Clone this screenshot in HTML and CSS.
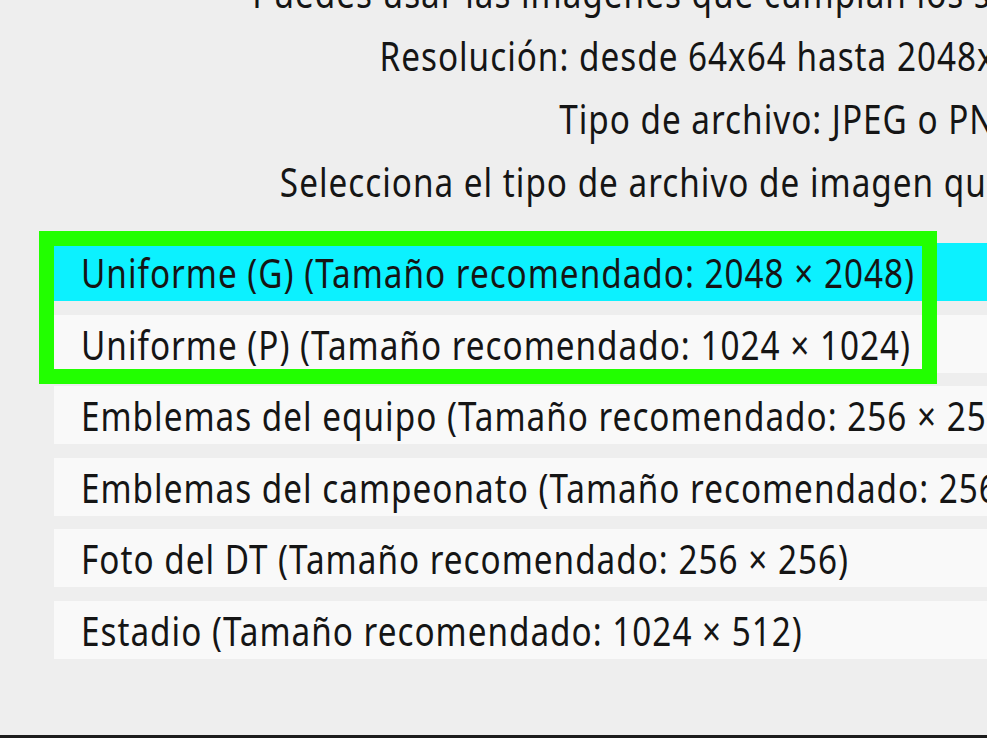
FILE: index.html
```html
<!DOCTYPE html>
<html lang="es">
<head>
<meta charset="utf-8">
<title>Importar imagen</title>
<link rel="stylesheet" href="styles.css">
</head>
<body>
<div class="screen">
  <section class="panel">
    <div class="intro">
      <p class="intro-line">Puedes usar las imágenes que cumplan los siguientes requisitos:</p>
      <p class="intro-line">Resolución: desde 64x64 hasta 2048x2048 píxeles</p>
      <p class="intro-line">Tipo de archivo: JPEG o PNG</p>
      <p class="intro-line">Selecciona el tipo de archivo de imagen que quieres importar.</p>
    </div>
    <ul class="options">
      <li class="option is-selected"><span class="label">Uniforme (G) (Tamaño recomendado: 2048 × 2048)</span></li>
      <li class="option"><span class="label">Uniforme (P) (Tamaño recomendado: 1024 × 1024)</span></li>
      <li class="option"><span class="label">Emblemas del equipo (Tamaño recomendado: 256 × 256)</span></li>
      <li class="option"><span class="label">Emblemas del campeonato (Tamaño recomendado: 256 × 256)</span></li>
      <li class="option"><span class="label">Foto del DT (Tamaño recomendado: 256 × 256)</span></li>
      <li class="option"><span class="label">Estadio (Tamaño recomendado: 1024 × 512)</span></li>
      <li class="focus-ring" aria-hidden="true"></li>
    </ul>
  </section>
</div>
</body>
</html>
```

FILE: styles.css
```css
html, body {
  margin: 0;
  padding: 0;
  background: #eeeeee;
  overflow: hidden;
}

body {
  font-family: "Noto Sans", "DejaVu Sans", sans-serif;
  font-size: 40px;
  color: #151515;
}

.screen {
  height: 738px;
  box-sizing: border-box;
  border-bottom: 3px solid #1c1c1c;
  overflow: hidden;
}

.panel {
  margin-left: 54px;
  width: 1472px;
}

/* the UI face is a narrow DIN-style sans; squeeze the text horizontally */
.intro {
  margin-top: -39px;
  text-align: center;
  letter-spacing: 1.2px;
}

.intro-line {
  margin: 0;
  line-height: 63px;
  white-space: nowrap;
  transform: scaleX(0.832);
}

.options {
  position: relative;
  list-style: none;
  margin: 30px 0 0;
  padding: 0;
  display: flex;
  flex-direction: column;
  gap: 13.6px;
}

.option {
  height: 58px;
  box-sizing: border-box;
  padding: 2px 0 0 27px;
  line-height: 55px;
  background: #f9f9f9;
  letter-spacing: 1.2px;
  white-space: nowrap;
}

.option .label {
  display: inline-block;
  transform: scaleX(0.832);
  transform-origin: 0 50%;
}

.option.is-selected {
  background: #0cf1ff;
}

/* keyboard focus highlight drawn over the first two entries */
.focus-ring {
  position: absolute;
  left: -15px;
  top: -12px;
  width: 898px;
  height: 153px;
  box-sizing: border-box;
  border: 15px solid #22ff00;
  pointer-events: none;
}
```
